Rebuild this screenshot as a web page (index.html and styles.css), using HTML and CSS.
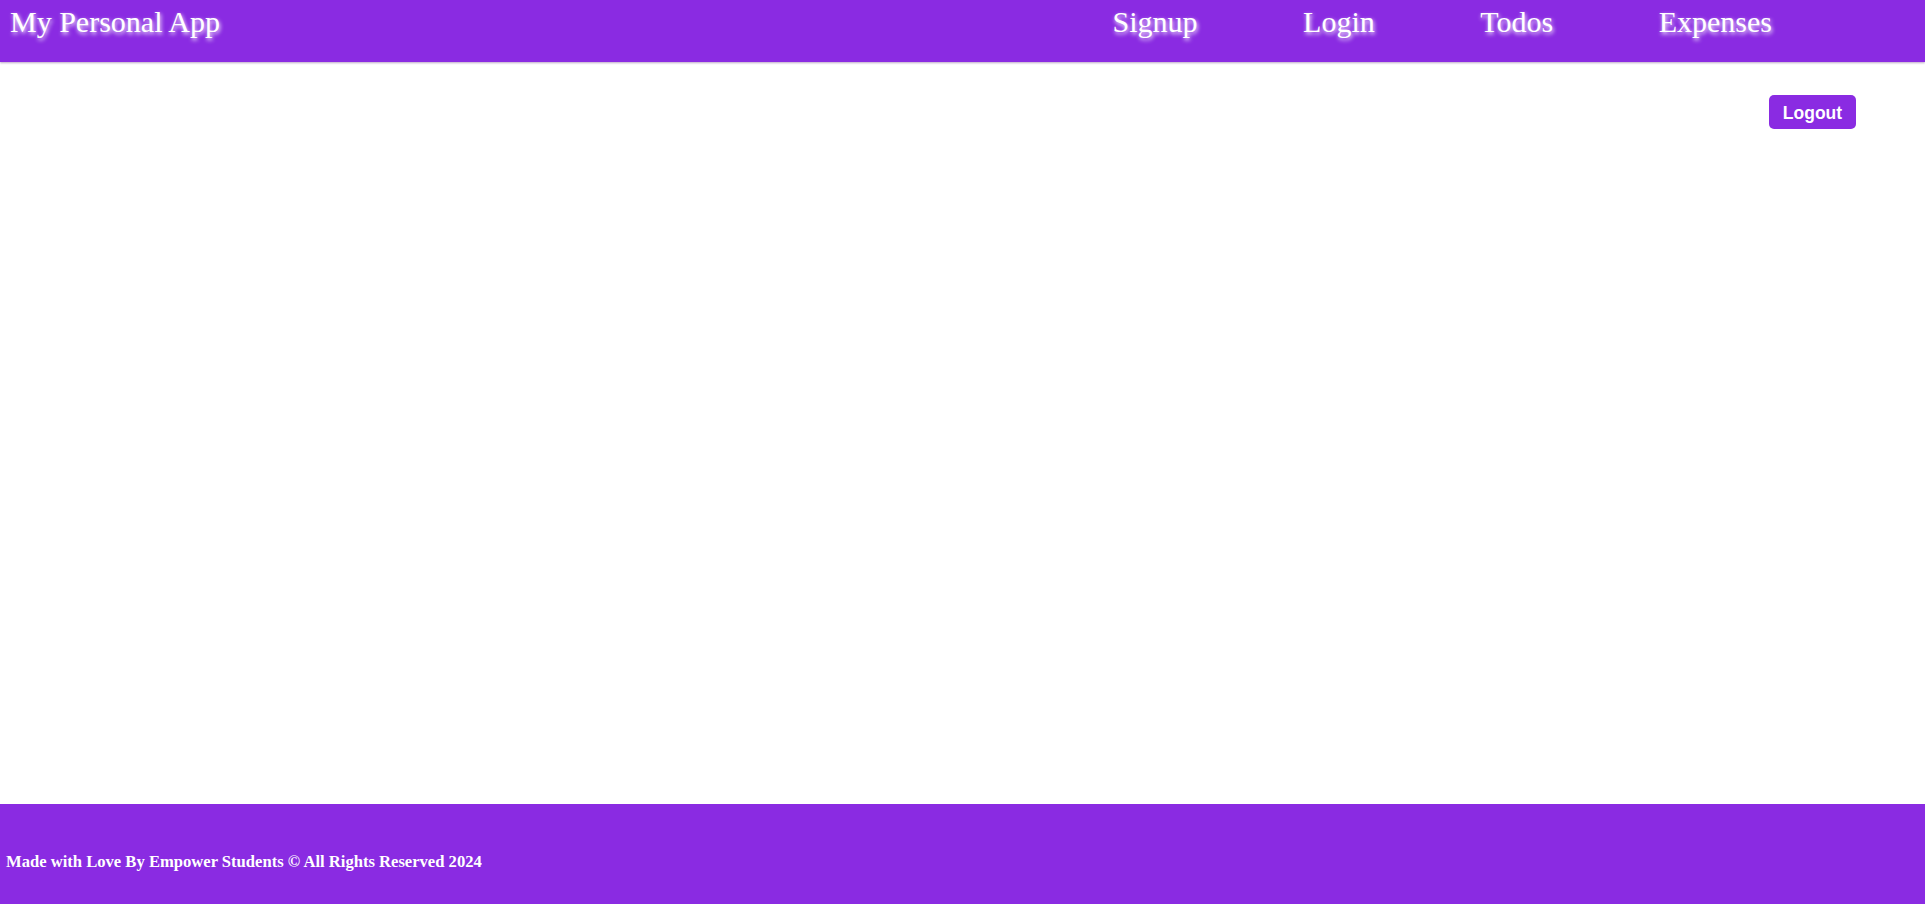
FILE: index.html
```html
<!DOCTYPE html>
<html lang="en">
<head>
<meta charset="utf-8">
<title>My Personal App</title>
<link rel="stylesheet" href="styles.css">
</head>
<body>
<div class="page">
  <header class="header">
    <div class="brand">My Personal App</div>
    <nav class="nav">
      <a class="nav-link" href="#">Signup</a>
      <a class="nav-link" href="#">Login</a>
      <a class="nav-link" href="#">Todos</a>
      <a class="nav-link" href="#">Expenses</a>
    </nav>
  </header>
  <main class="main">
    <button class="logout" type="button">Logout</button>
  </main>
  <footer class="footer">
    <p class="footer-text">Made with Love By Empower Students © All Rights Reserved 2024</p>
  </footer>
</div>
</body>
</html>
```
FILE: styles.css
```css
* { box-sizing: border-box; }
html, body { margin: 0; padding: 0; }
body {
  font-family: "Liberation Serif", "Times New Roman", serif;
  background: #ffffff;
}
.page {
  min-height: 100vh;
  display: flex;
  flex-direction: column;
}
.header {
  height: 62px;
  background: #8a2be2;
  display: flex;
  align-items: flex-start;
  padding: 5px 153px 0 10px;
  box-shadow: 0 1px 2px rgba(60, 0, 90, 0.35);
  position: relative;
  z-index: 1;
}
.brand, .nav-link {
  font-size: 30px;
  color: #ffffff;
  text-shadow: 1px 2px 4px #ffffff;
  text-decoration: none;
  line-height: normal;
}
.nav {
  margin-left: auto;
  display: flex;
  gap: 105.5px;
}
.main {
  flex: 1;
  display: flex;
  justify-content: flex-end;
  align-items: flex-start;
  padding: 33px 69px 0 0;
}
.logout {
  width: 87px;
  height: 34px;
  background: #8a2be2;
  color: #ffffff;
  border: none;
  border-radius: 5px;
  font-family: "Liberation Sans", Arial, sans-serif;
  font-weight: bold;
  font-size: 17.5px;
  padding: 2px 0 0 0;
  cursor: pointer;
}
.footer {
  height: 100px;
  background: #8a2be2;
  padding: 48px 6px 0 6px;
}
.footer-text {
  margin: 0;
  color: #ffffff;
  font-weight: bold;
  font-size: 16.6px;
}
```
